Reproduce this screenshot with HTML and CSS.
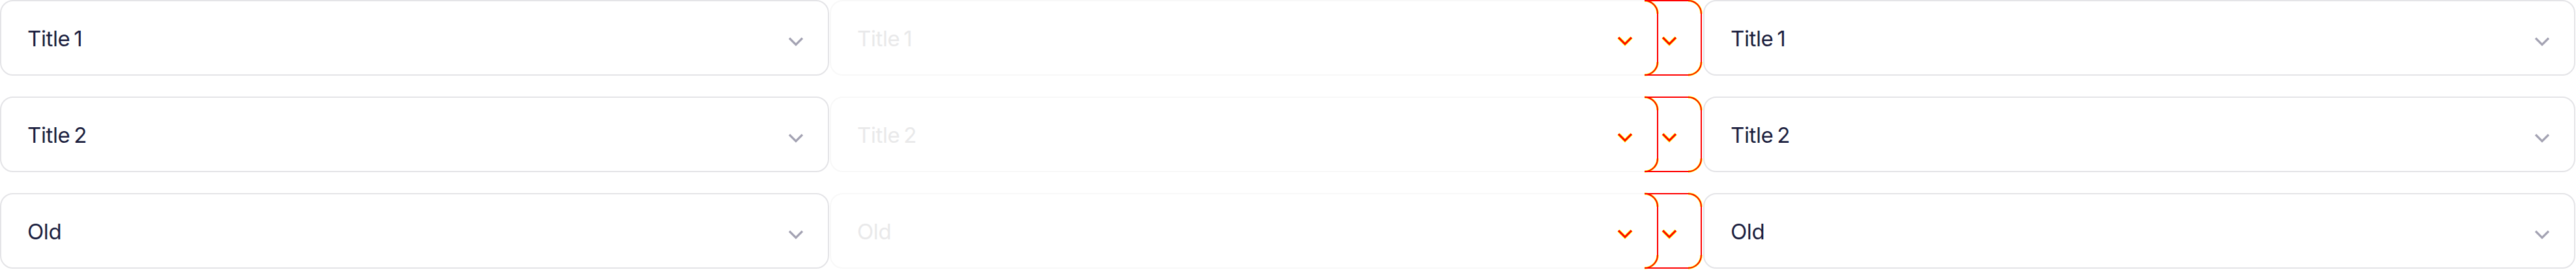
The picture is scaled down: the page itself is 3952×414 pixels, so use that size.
FILE: index.html
```html
<!DOCTYPE html>
<html lang="en">
<head>
<meta charset="utf-8">
<title>Select diff</title>
<link rel="stylesheet" href="styles.css">
</head>
<body>
<div class="board">
  <div class="col col-expected">
    <div class="select"><span class="label">Title 1</span><svg class="chev" width="24" height="16" viewBox="0 0 24 16"><polyline points="2,2.5 12,12.5 22,2.5"/></svg></div>
    <div class="select"><span class="label">Title 2</span><svg class="chev" width="24" height="16" viewBox="0 0 24 16"><polyline points="2,2.5 12,12.5 22,2.5"/></svg></div>
    <div class="select"><span class="label">Old</span><svg class="chev" width="24" height="16" viewBox="0 0 24 16"><polyline points="2,2.5 12,12.5 22,2.5"/></svg></div>
  </div>

  <div class="col col-diff">
    <div class="diff-cell">
      <div class="select ghost"><span class="label">Title 1</span></div>
      <svg class="diff-marks" width="1338" height="116" viewBox="0 0 1338 116">
        <path class="aa" d="M1250 1 A20 20 0 0 1 1270 21 M1270 95 A20 20 0 0 1 1250 115 M1317 1 A20 20 0 0 1 1337 21 M1337 95 A20 20 0 0 1 1317 115"/>
        <path class="hit" d="M1250 1 A20 20 0 0 1 1270 21 V95 A20 20 0 0 1 1250 115"/>
        <path class="hit" d="M1250 1 H1317 A20 20 0 0 1 1337 21 V95 A20 20 0 0 1 1317 115 H1250"/>
        <polyline class="aa-chev" points="1210,57.5 1220,67.5 1230,57.5"/>
        <polyline class="hit-chev" points="1210,57.5 1220,67.5 1230,57.5"/>
        <polyline class="aa-chev" points="1278,57.5 1288,67.5 1298,57.5"/>
        <polyline class="hit-chev" points="1278,57.5 1288,67.5 1298,57.5"/>
      </svg>
    </div>
    <div class="diff-cell">
      <div class="select ghost"><span class="label">Title 2</span></div>
      <svg class="diff-marks" width="1338" height="116" viewBox="0 0 1338 116">
        <path class="aa" d="M1250 1 A20 20 0 0 1 1270 21 M1270 95 A20 20 0 0 1 1250 115 M1317 1 A20 20 0 0 1 1337 21 M1337 95 A20 20 0 0 1 1317 115"/>
        <path class="hit" d="M1250 1 A20 20 0 0 1 1270 21 V95 A20 20 0 0 1 1250 115"/>
        <path class="hit" d="M1250 1 H1317 A20 20 0 0 1 1337 21 V95 A20 20 0 0 1 1317 115 H1250"/>
        <polyline class="aa-chev" points="1210,57.5 1220,67.5 1230,57.5"/>
        <polyline class="hit-chev" points="1210,57.5 1220,67.5 1230,57.5"/>
        <polyline class="aa-chev" points="1278,57.5 1288,67.5 1298,57.5"/>
        <polyline class="hit-chev" points="1278,57.5 1288,67.5 1298,57.5"/>
      </svg>
    </div>
    <div class="diff-cell">
      <div class="select ghost"><span class="label">Old</span></div>
      <svg class="diff-marks" width="1338" height="116" viewBox="0 0 1338 116">
        <path class="aa" d="M1250 1 A20 20 0 0 1 1270 21 M1270 95 A20 20 0 0 1 1250 115 M1317 1 A20 20 0 0 1 1337 21 M1337 95 A20 20 0 0 1 1317 115"/>
        <path class="hit" d="M1250 1 A20 20 0 0 1 1270 21 V95 A20 20 0 0 1 1250 115"/>
        <path class="hit" d="M1250 1 H1317 A20 20 0 0 1 1337 21 V95 A20 20 0 0 1 1317 115 H1250"/>
        <polyline class="aa-chev" points="1210,57.5 1220,67.5 1230,57.5"/>
        <polyline class="hit-chev" points="1210,57.5 1220,67.5 1230,57.5"/>
        <polyline class="aa-chev" points="1278,57.5 1288,67.5 1298,57.5"/>
        <polyline class="hit-chev" points="1278,57.5 1288,67.5 1298,57.5"/>
      </svg>
    </div>
  </div>

  <div class="col col-actual">
    <div class="select"><span class="label">Title 1</span><svg class="chev" width="24" height="16" viewBox="0 0 24 16"><polyline points="2,2.5 12,12.5 22,2.5"/></svg></div>
    <div class="select"><span class="label">Title 2</span><svg class="chev" width="24" height="16" viewBox="0 0 24 16"><polyline points="2,2.5 12,12.5 22,2.5"/></svg></div>
    <div class="select"><span class="label">Old</span><svg class="chev" width="24" height="16" viewBox="0 0 24 16"><polyline points="2,2.5 12,12.5 22,2.5"/></svg></div>
  </div>
</div>
</body>
</html>
```

FILE: styles.css
```css
html, body {
  margin: 0;
  padding: 0;
  background: #ffffff;
}

body {
  font-family: "Inter", "Noto Sans", sans-serif;
}

.board {
  display: flex;
  align-items: flex-start;
  width: 3952px;
  height: 414px;
  overflow: hidden;
}

.col {
  display: flex;
  flex-direction: column;
  gap: 32px;
  flex: none;
}

.col-expected {
  width: 1272px;
}

.col-diff {
  width: 1338px;
  margin-left: 1px;
}

.col-actual {
  width: 1338px;
  margin-left: 2px;
}

.select {
  box-sizing: border-box;
  height: 116px;
  border: 2px solid #e4e4e7;
  border-radius: 20px;
  padding: 0 37px 0 40px;
  display: flex;
  align-items: center;
  justify-content: space-between;
  background: #ffffff;
}

.label {
  font-size: 33px;
  line-height: 40px;
  letter-spacing: -0.4px;
  word-spacing: -3px;
  color: #1c1f40;
  margin-top: 2px;
}

.chev {
  flex: none;
  margin-top: 12px;
}

.chev polyline {
  fill: none;
  stroke: #a4a3b3;
  stroke-width: 3.2;
}

.diff-cell {
  position: relative;
  width: 1338px;
  height: 116px;
}

.select.ghost {
  width: 1272px;
  border-color: #f8f8f8;
}

.select.ghost .label {
  color: #e9e9ea;
}

.diff-marks {
  position: absolute;
  left: 0;
  top: 0;
  overflow: visible;
}

.diff-marks .aa {
  fill: none;
  stroke: #ffff00;
  stroke-width: 3.4;
}

.diff-marks .hit {
  fill: none;
  stroke: #ff0000;
  stroke-width: 2;
}

.diff-marks .aa-chev {
  fill: none;
  stroke: #ffff00;
  stroke-width: 4.6;
}

.diff-marks .hit-chev {
  fill: none;
  stroke: #ff0000;
  stroke-width: 3;
}
```
